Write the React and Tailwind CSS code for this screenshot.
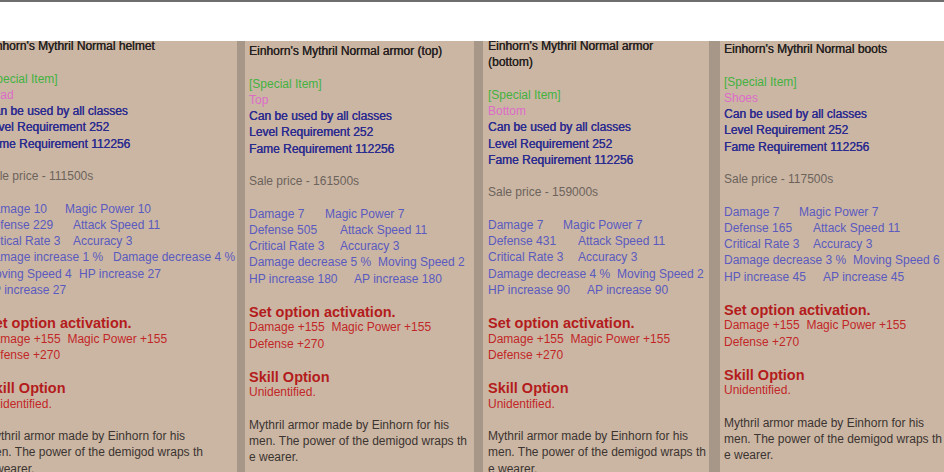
import React from 'react';

const DESC = [
  'Mythril armor made by Einhorn for his',
  'men. The power of the demigod wraps th',
  'e wearer.',
];

const panels = [
  {
    id: 'helmet',
    box: 'w-[256px] pl-[4px] pt-0 -mt-[3px]',
    title: ["Einhorn's Mythril Normal helmet"],
    slot: 'Head',
    price: '111500s',
    stats: [
      ['Damage 10', 'Magic Power 10', 'w-[80px]'],
      ['Defense 229', 'Attack Speed 11', 'w-[88px]'],
      ['Critical Rate 3', 'Accuracy 3', 'w-[88px]'],
      ['Damage increase 1 %', 'Damage decrease 4 %', 'w-[128px]'],
      ['Moving Speed 4', 'HP increase 27', 'w-[94px]'],
      ['AP increase 27', null, ''],
    ],
  },
  {
    id: 'top',
    box: 'w-[229px] pl-[4px] pt-[2px]',
    title: ["Einhorn's Mythril Normal armor (top)"],
    slot: 'Top',
    price: '161500s',
    stats: [
      ['Damage 7', 'Magic Power 7', 'w-[76px]'],
      ['Defense 505', 'Attack Speed 11', 'w-[91px]'],
      ['Critical Rate 3', 'Accuracy 3', 'w-[91px]'],
      ['Damage decrease 5 %', 'Moving Speed 2', 'w-[129px]'],
      ['HP increase 180', 'AP increase 180', 'w-[105px]'],
    ],
  },
  {
    id: 'bottom',
    box: 'w-[226px] pl-[5px] pt-0 -mt-[3px]',
    title: ["Einhorn's Mythril Normal armor", '(bottom)'],
    slot: 'Bottom',
    price: '159000s',
    stats: [
      ['Damage 7', 'Magic Power 7', 'w-[75px]'],
      ['Defense 431', 'Attack Speed 11', 'w-[90px]'],
      ['Critical Rate 3', 'Accuracy 3', 'w-[90px]'],
      ['Damage decrease 4 %', 'Moving Speed 2', 'w-[129px]'],
      ['HP increase 90', 'AP increase 90', 'w-[99px]'],
    ],
  },
  {
    id: 'boots',
    box: 'flex-1 pl-[4px] pt-0',
    title: ["Einhorn's Mythril Normal boots"],
    slot: 'Shoes',
    price: '117500s',
    stats: [
      ['Damage 7', 'Magic Power 7', 'w-[75px]'],
      ['Defense 165', 'Attack Speed 11', 'w-[89px]'],
      ['Critical Rate 3', 'Accuracy 3', 'w-[89px]'],
      ['Damage decrease 3 %', 'Moving Speed 6', 'w-[129px]'],
      ['HP increase 45', 'AP increase 45', 'w-[99px]'],
    ],
  },
];

const Line = ({ className = '', children }) => (
  <div className={`h-[16.25px] leading-[16.25px] whitespace-nowrap ${className}`}>
    {children}
  </div>
);

const Blank = () => <Line>&nbsp;</Line>;

// heavier look for the dark title / requirement lines
const heavy = '[text-shadow:0.35px_0_0_currentColor]';

const Tooltip = ({ panel }) => (
  <div className={`shrink-0 bg-[#cbb6a4] ${panel.box}`}>
    {panel.title.map((t) => (
      <Line key={t} className={`text-[#26211e] ${heavy}`}>{t}</Line>
    ))}
    <Blank />
    <Line className="text-[#42b23f]">[Special Item]</Line>
    <Line className="text-[#dc6cc8]">{panel.slot}</Line>
    <Line className={`text-[#2b2b8f] ${heavy}`}>Can be used by all classes</Line>
    <Line className={`text-[#2b2b8f] ${heavy}`}>Level Requirement 252</Line>
    <Line className={`text-[#2b2b8f] ${heavy}`}>Fame Requirement 112256</Line>
    <Blank />
    <Line className="text-[#6c635b]">Sale price - {panel.price}</Line>
    <Blank />
    {panel.stats.map(([a, b, w]) => (
      <Line key={a} className="text-[#5a5abf]">
        <span className={`inline-block ${w}`}>{a}</span>
        {b && <span>{b}</span>}
      </Line>
    ))}
    <Blank />
    <Line className="text-[14.5px] font-bold text-[#b41c1c] translate-y-[1px]">
      Set option activation.
    </Line>
    <Line className="text-[#c22727]">Damage +155&nbsp;&nbsp;Magic Power +155</Line>
    <Line className="text-[#c22727]">Defense +270</Line>
    <Blank />
    <Line className="text-[14.5px] font-bold text-[#b41c1c] translate-y-[1px]">Skill Option</Line>
    <Line className="text-[#c22727]">Unidentified.</Line>
    <Blank />
    {DESC.map((d) => (
      <Line key={d} className="text-[#3b3430]">{d}</Line>
    ))}
  </div>
);

const Divider = ({ w }) => <div className={`shrink-0 self-stretch bg-[#a69789] ${w}`} />;

export default function App() {
  return (
    <div className="w-[944px] h-[472px] overflow-hidden bg-white border-t-2 border-[#6e6e6e] font-['Liberation_Sans',Arial,sans-serif] text-[12px]">
      <div className="h-[39px]" />
      <div className="flex h-[431px] -ml-[19px] overflow-hidden">
        <Tooltip panel={panels[0]} />
        <Divider w="w-[8px]" />
        <Tooltip panel={panels[1]} />
        <Divider w="w-[9px]" />
        <Tooltip panel={panels[2]} />
        <Divider w="w-[11px]" />
        <Tooltip panel={panels[3]} />
      </div>
    </div>
  );
}
